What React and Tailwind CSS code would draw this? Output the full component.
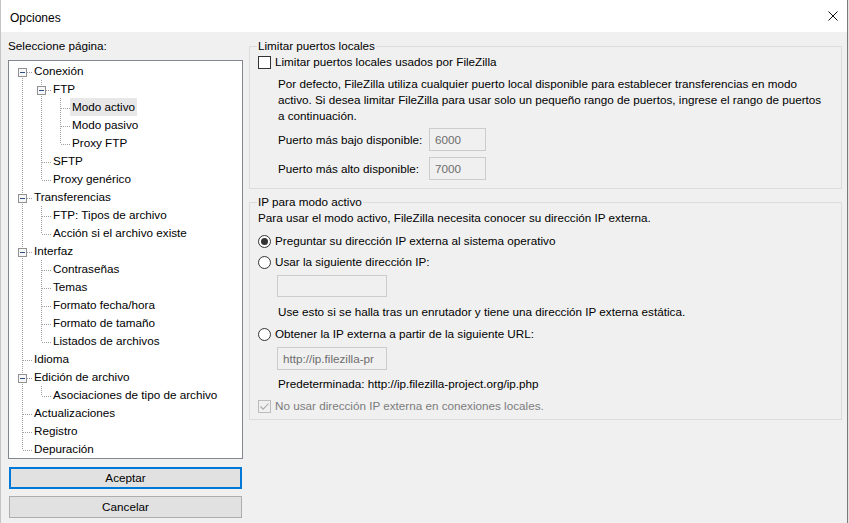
import { Fragment } from "react";

const tree = [
  {
    label: "Conexión",
    children: [
      {
        label: "FTP",
        children: [{ label: "Modo activo", selected: true }, { label: "Modo pasivo" }, { label: "Proxy FTP" }],
      },
      { label: "SFTP" },
      { label: "Proxy genérico" },
    ],
  },
  {
    label: "Transferencias",
    children: [{ label: "FTP: Tipos de archivo" }, { label: "Acción si el archivo existe" }],
  },
  {
    label: "Interfaz",
    children: [
      { label: "Contraseñas" },
      { label: "Temas" },
      { label: "Formato fecha/hora" },
      { label: "Formato de tamaño" },
      { label: "Listados de archivos" },
    ],
  },
  { label: "Idioma" },
  { label: "Edición de archivo", children: [{ label: "Asociaciones de tipo de archivo" }] },
  { label: "Actualizaciones" },
  { label: "Registro" },
  { label: "Depuración" },
];

// flatten the tree into rows, remembering which ancestor lines keep going
function flatten(nodes, level = 0, pipes = []) {
  const rows = [];
  nodes.forEach((node, i) => {
    const isLast = i === nodes.length - 1;
    rows.push({
      label: node.label,
      selected: node.selected,
      hasChildren: !!node.children,
      isFirstRoot: level === 0 && i === 0,
      isLast,
      pipes,
    });
    if (node.children) {
      rows.push(...flatten(node.children, level + 1, [...pipes, !isLast]));
    }
  });
  return rows;
}

const rows = flatten(tree);

function Pipe() {
  return (
    <svg width="19" height="18" className="shrink-0" shapeRendering="crispEdges">
      <line x1="9.5" y1="0" x2="9.5" y2="18" stroke="#a0a0a0" strokeDasharray="1 1" />
    </svg>
  );
}

function Branch({ row }) {
  return (
    <svg width="19" height="18" className="shrink-0" shapeRendering="crispEdges">
      {!row.isFirstRoot && <line x1="9.5" y1="0" x2="9.5" y2="10" stroke="#a0a0a0" strokeDasharray="1 1" />}
      {!row.isLast && <line x1="9.5" y1="10" x2="9.5" y2="18" stroke="#a0a0a0" strokeDasharray="1 1" />}
      <line x1={row.hasChildren ? 14 : 10} y1="10.5" x2="19" y2="10.5" stroke="#a0a0a0" strokeDasharray="1 1" />
      {row.hasChildren && (
        <g>
          <rect x="5.5" y="6.5" width="8" height="8" fill="#f7f7f7" stroke="#919191" />
          <rect x="7" y="10" width="5" height="1" fill="#2d4f86" />
        </g>
      )}
    </svg>
  );
}

function TreeRow({ row }) {
  return (
    <div className="flex h-[18px] items-stretch">
      {row.pipes.map((more, i) =>
        more ? <Pipe key={i} /> : <div key={i} className="w-[19px] shrink-0" />
      )}
      <Branch row={row} />
      <span
        className={
          row.selected
            ? "flex items-center whitespace-nowrap bg-[#e8e8e8] px-[2px]"
            : "flex items-center whitespace-nowrap px-[2px]"
        }
      >
        {row.label}
      </span>
    </div>
  );
}

function CheckBox({ checked, disabled }) {
  return (
    <span
      className={
        disabled
          ? "flex size-[13px] shrink-0 items-center justify-center border border-[#bcbcbc] bg-[#f0f0f0]"
          : "flex size-[13px] shrink-0 items-center justify-center border border-[#333] bg-white"
      }
    >
      {checked && (
        <svg width="11" height="11" viewBox="0 0 11 11">
          <path d="M1.5 5.5 L4.2 8.2 L9.5 2.5" fill="none" stroke={disabled ? "#a8a8a8" : "#333"} strokeWidth="1.1" />
        </svg>
      )}
    </span>
  );
}

function Radio({ checked }) {
  return (
    <span className="flex size-[13px] shrink-0 items-center justify-center rounded-full border border-[#333] bg-white">
      {checked && <span className="size-[7px] rounded-full bg-[#333]" />}
    </span>
  );
}

function Field({ value, className }) {
  return (
    <div
      className={
        "flex items-center overflow-hidden whitespace-nowrap border border-[#cccccc] bg-[#f0f0f0] pl-[5px] text-[#6d6d6d] " +
        className
      }
    >
      {value}
    </div>
  );
}

export default function App() {
  return (
    <div className="h-[523px] w-[849px] overflow-hidden bg-[#e3e3e3] font-['Liberation_Sans',Arial,sans-serif] text-[11.7px] leading-4 text-black">
      <div className="flex h-full w-[848px] flex-col border-l border-r border-l-[#c4c4c4] border-r-[#7a7a7a] bg-[#f0f0f0]">
        {/* title bar */}
        <div className="flex h-[32px] items-center justify-between bg-white pl-[9px] pr-[9px] text-[12px]">
          <span className="mt-[3px]">Opciones</span>
          <svg width="10" height="10" viewBox="0 0 10 10">
            <path d="M0.5 0.5 L9.5 9.5 M9.5 0.5 L0.5 9.5" stroke="#111" strokeWidth="1" />
          </svg>
        </div>

        <div className="flex gap-[6px] pl-[7px]">
          {/* left column */}
          <div className="flex w-[235px] flex-col">
            <div className="flex h-[28px] items-center">Seleccione página:</div>
            <div className="h-[399px] overflow-hidden border border-[#828790] bg-white pl-[4px] pt-[1px]">
              {rows.map((row, i) => (
                <TreeRow key={i} row={row} />
              ))}
            </div>
            <button className="mx-[1px] mt-[8px] flex h-[22px] items-center justify-center border-2 border-[#0078d7] bg-[#e1e1e1]">
              Aceptar
            </button>
            <button className="mx-[1px] mt-[7px] flex h-[22px] items-center justify-center border border-[#adadad] bg-[#e1e1e1]">
              Cancelar
            </button>
          </div>

          {/* right column */}
          <div className="flex w-[593px] flex-col">
            <fieldset className="mt-[6px] border border-[#dcdcdc] pb-[8px] pl-[8px]">
              <legend className="-ml-[1px] px-[1px]">Limitar puertos locales</legend>
              <div className="flex h-4 items-center gap-[4px]">
                <CheckBox />
                <span>Limitar puertos locales usados por FileZilla</span>
              </div>
              <p className="ml-[20px] mt-[6px] whitespace-nowrap">
                Por defecto, FileZilla utiliza cualquier puerto local disponible para establecer transferencias en modo
                <br />
                activo. Si desea limitar FileZilla para usar solo un pequeño rango de puertos, ingrese el rango de puertos
                <br />a continuación.
              </p>
              <div className="ml-[20px] mt-[4px] flex items-center">
                <span className="w-[151px]">Puerto más bajo disponible:</span>
                <Field value="6000" className="h-[23px] w-[57px]" />
              </div>
              <div className="ml-[20px] mt-[6px] flex items-center">
                <span className="w-[151px]">Puerto más alto disponible:</span>
                <Field value="7000" className="h-[23px] w-[57px]" />
              </div>
            </fieldset>

            <fieldset className="mt-[5px] border border-[#dcdcdc] pb-[5px] pl-[8px]">
              <legend className="-ml-[1px] px-[1px]">IP para modo activo</legend>
              <p>Para usar el modo activo, FileZilla necesita conocer su dirección IP externa.</p>
              <div className="mt-[7px] flex h-4 items-center gap-[4px]">
                <Radio checked />
                <span>Preguntar su dirección IP externa al sistema operativo</span>
              </div>
              <div className="mt-[5px] flex h-4 items-center gap-[4px]">
                <Radio />
                <span>Usar la siguiente dirección IP:</span>
              </div>
              <Field value="" className="ml-[19px] mt-[5px] h-[22px] w-[110px]" />
              <p className="ml-[20px] mt-[7px]">
                Use esto si se halla tras un enrutador y tiene una dirección IP externa estática.
              </p>
              <div className="mt-[6px] flex h-4 items-center gap-[4px]">
                <Radio />
                <span>Obtener la IP externa a partir de la siguiente URL:</span>
              </div>
              <Field value="http://ip.filezilla-pr" className="ml-[19px] mt-[5px] h-[23px] w-[110px]" />
              <p className="ml-[20px] mt-[6px]">Predeterminada: http://ip.filezilla-project.org/ip.php</p>
              <div className="mt-[6px] flex h-4 items-center gap-[4px] text-[#7c7c7c]">
                <CheckBox checked disabled />
                <span>No usar dirección IP externa en conexiones locales.</span>
              </div>
            </fieldset>
          </div>
        </div>
      </div>
    </div>
  );
}
